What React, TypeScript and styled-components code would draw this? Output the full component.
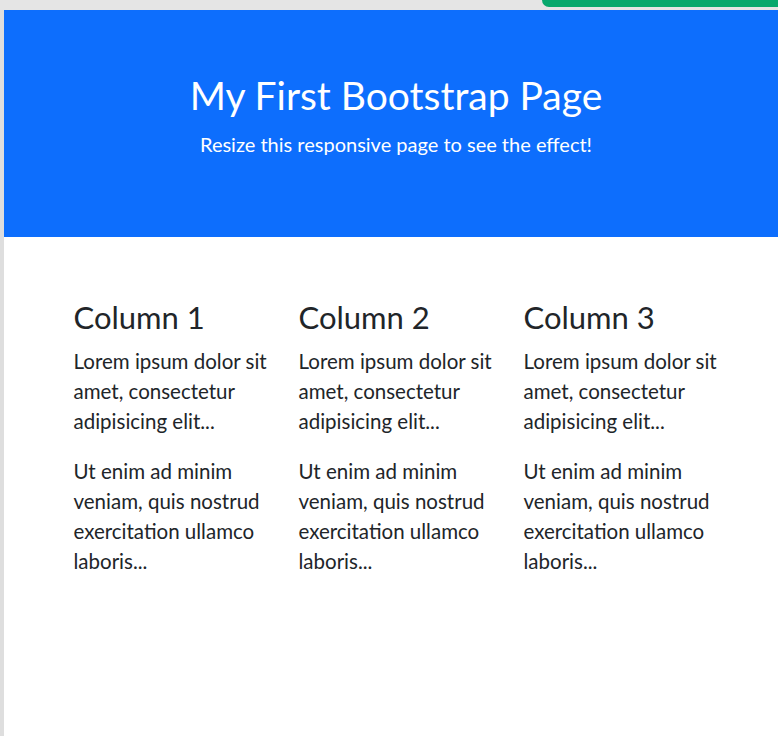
import React from "react";
import styled, { createGlobalStyle } from "styled-components";

const Global = createGlobalStyle`
  html, body { margin: 0; padding: 0; background: #e5e5e5; overflow: hidden; }
  body { font-family: Lato, "Open Sans", sans-serif; color: #212529; }
  #root { width: 778px; height: 736px; overflow: hidden; }
`;

const Frame = styled.div`
  display: flex;
  flex-direction: column;
  width: 778px;
  height: 736px;
  background: #e5e5e5;
`;

const TopBar = styled.div`
  height: 10px;
  flex: 0 0 10px;
  display: flex;
  justify-content: flex-end;
  align-items: flex-start;
`;

const GreenTab = styled.div`
  width: 236px;
  height: 7px;
  background: #07a86d;
  border-bottom-left-radius: 7px;
`;

const Body = styled.div`
  flex: 1;
  display: flex;
  min-height: 0;
`;

const SideStrip = styled.div`
  width: 4px;
  flex: 0 0 4px;
  background: #dedede;
`;

const Page = styled.div`
  flex: 0 0 784px;
  width: 784px;
  background: #ffffff;
`;

const Hero = styled.header`
  background: #0d6efd;
  color: #ffffff;
  text-align: center;
  padding: 62px 60px 58px;
`;

const HeroTitle = styled.h1`
  margin: 0 0 10px;
  font-size: 39px;
  font-weight: 400;
  line-height: 47px;
`;

const HeroText = styled.p`
  margin: 0 0 20px;
  font-size: 20px;
  line-height: 30px;
`;

const Container = styled.main`
  width: 675px;
  margin: 62px auto 0;
  padding: 0 15px;
  box-sizing: border-box;
`;

const Row = styled.div`
  display: grid;
  grid-template-columns: repeat(3, 1fr);
  margin: 0 -15px;
`;

const Col = styled.section`
  padding: 0 15px;
`;

const ColTitle = styled.h3`
  margin: 0 0 10px;
  font-size: 31px;
  font-weight: 400;
  line-height: 37px;
`;

const ColText = styled.p`
  margin: 0 0 20px;
  font-size: 20.5px;
  line-height: 30px;
`;

const columns = ["Column 1", "Column 2", "Column 3"];

export default function App() {
  return (
    <>
      <Global />
      <Frame>
        <TopBar>
          <GreenTab />
        </TopBar>
        <Body>
          <SideStrip />
          <Page>
            <Hero>
              <HeroTitle>My First Bootstrap Page</HeroTitle>
              <HeroText>Resize this responsive page to see the effect!</HeroText>
            </Hero>
            <Container>
              <Row>
                {columns.map((c) => (
                  <Col key={c}>
                    <ColTitle>{c}</ColTitle>
                    <ColText>Lorem ipsum dolor sit amet, consectetur adipisicing elit...</ColText>
                    <ColText>Ut enim ad minim veniam, quis nostrud exercitation ullamco laboris...</ColText>
                  </Col>
                ))}
              </Row>
            </Container>
          </Page>
        </Body>
      </Frame>
    </>
  );
}
